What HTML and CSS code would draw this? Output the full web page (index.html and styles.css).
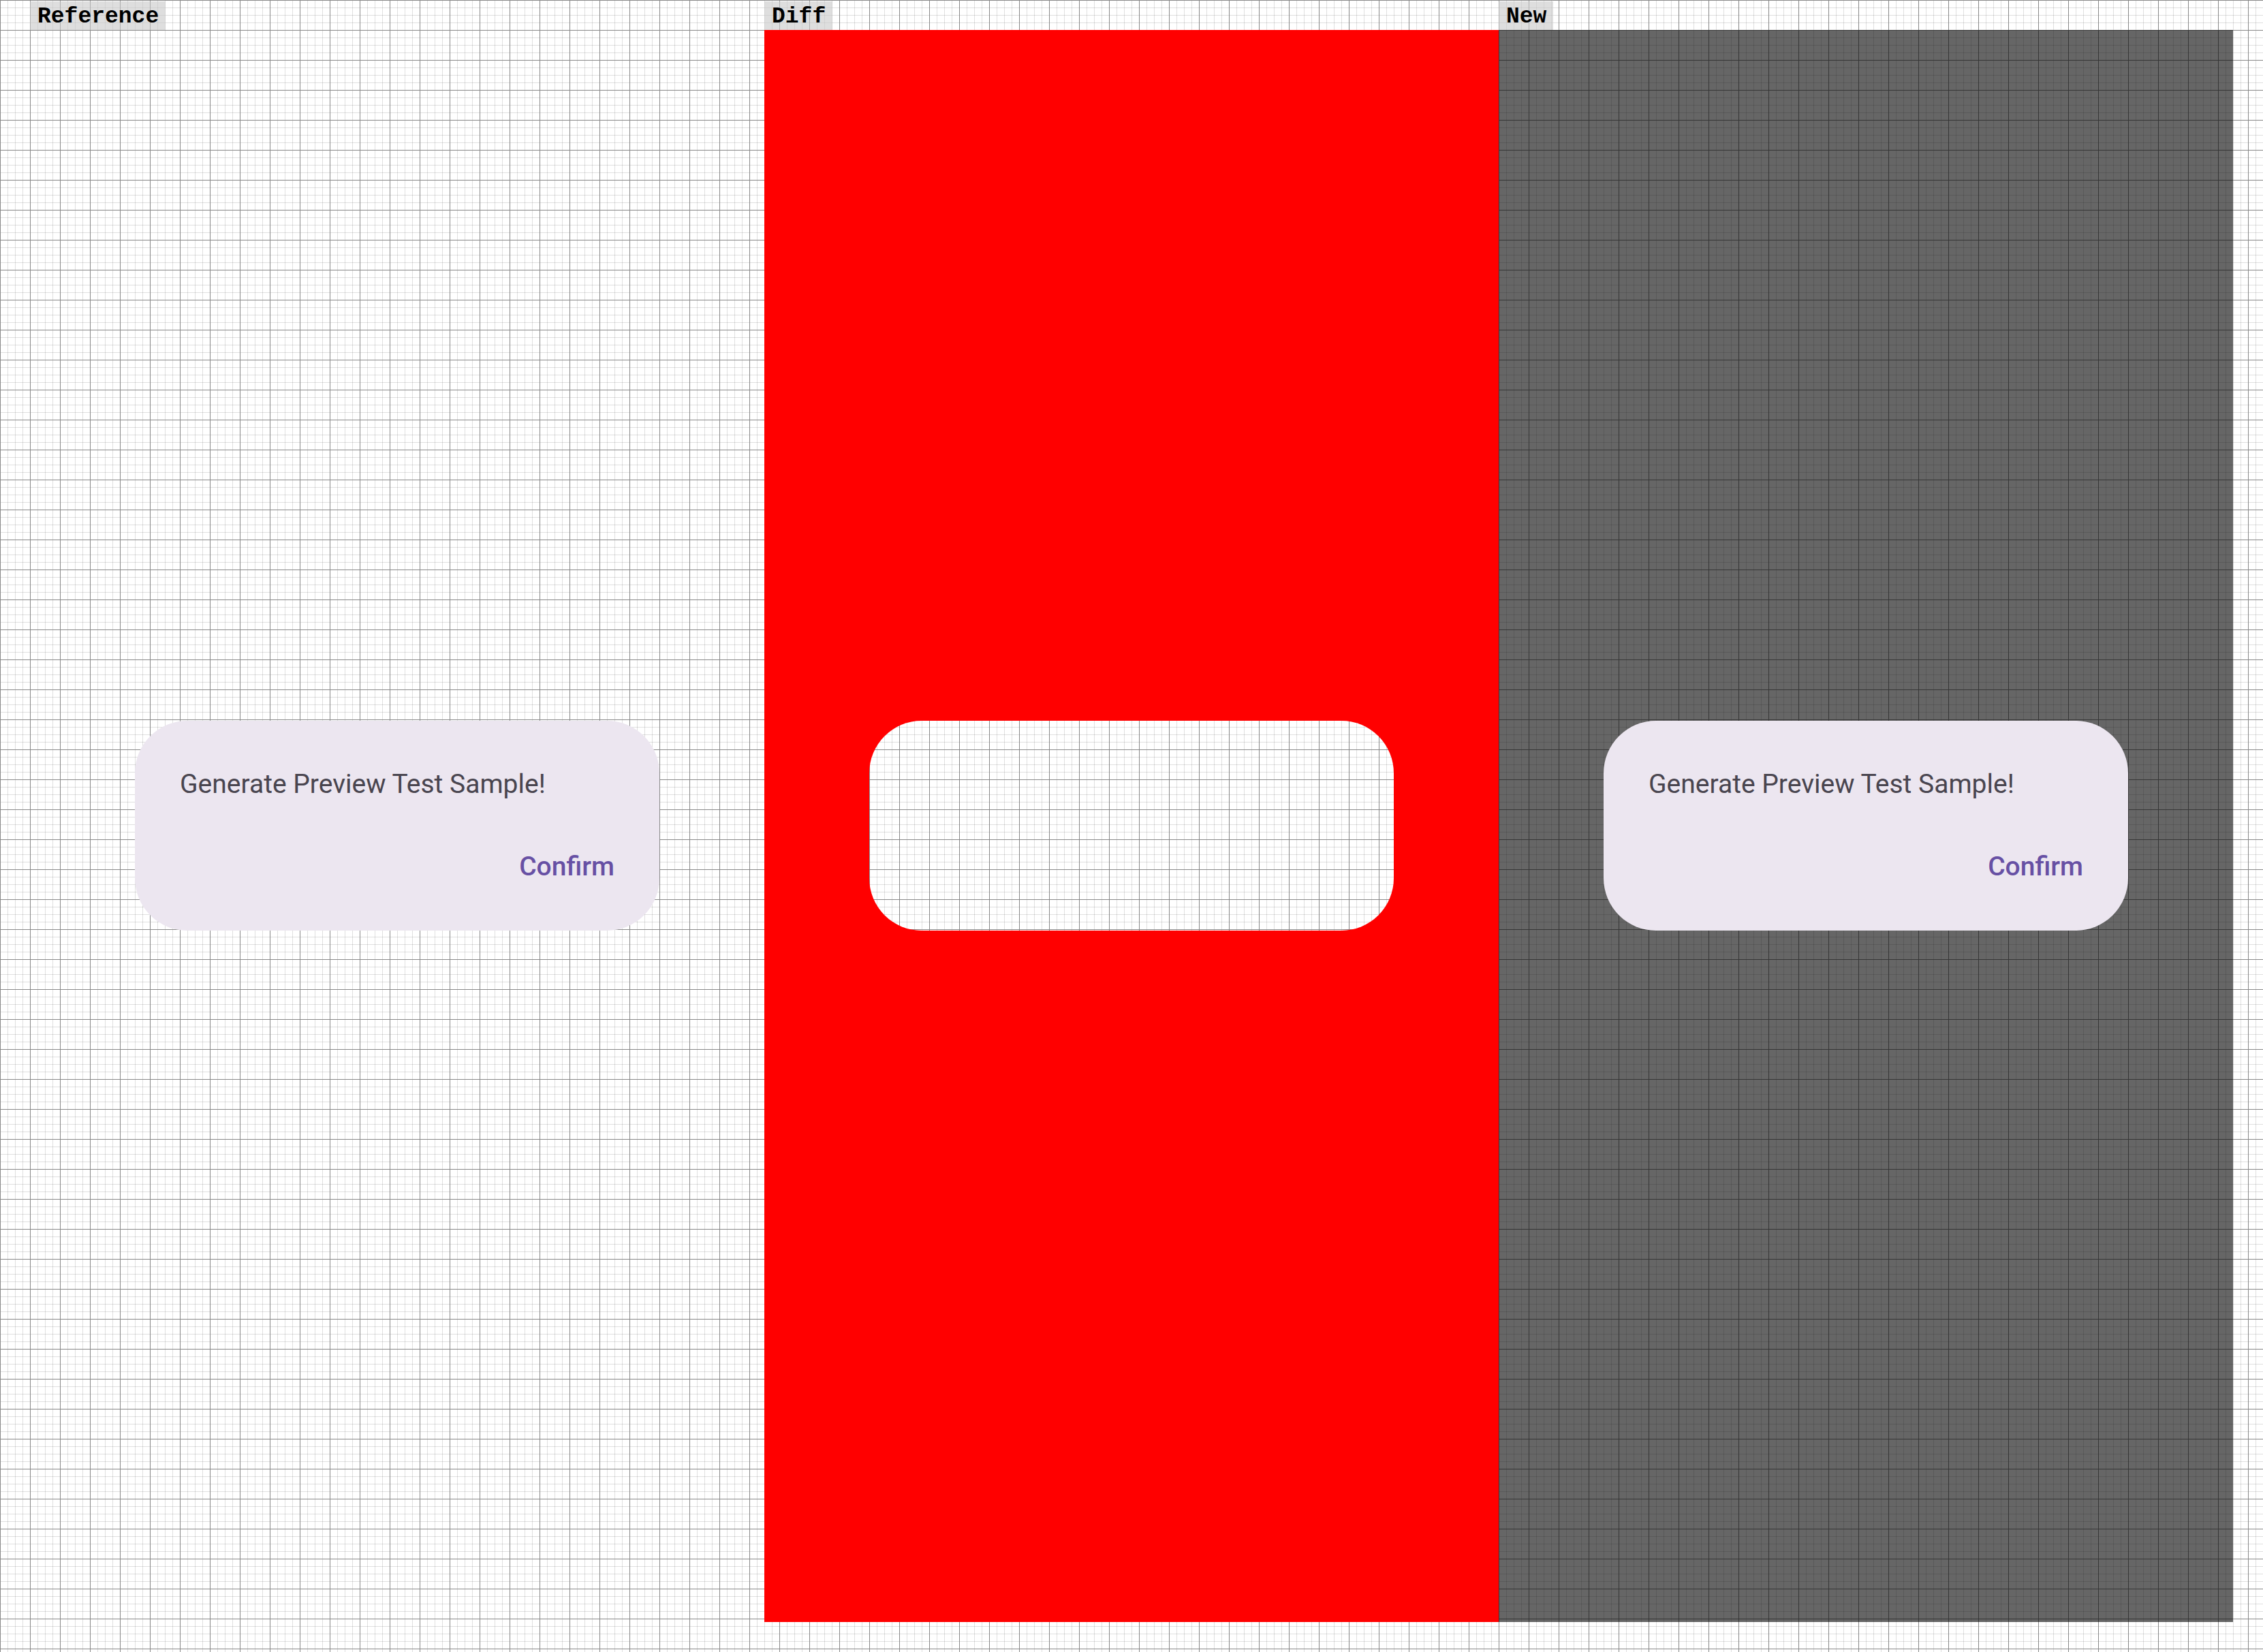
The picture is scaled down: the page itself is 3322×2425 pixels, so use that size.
FILE: index.html
```html
<!DOCTYPE html>
<html lang="en">
<head>
<meta charset="utf-8">
<title>Screenshot comparison</title>
<link rel="stylesheet" href="styles.css">
</head>
<body>
<main class="comparison">
  <section class="column">
    <h2 class="label">Reference</h2>
    <div class="panel">
      <div class="dialog">
        <p class="dialog-text">Generate Preview Test Sample!</p>
        <button class="dialog-confirm" type="button">Confirm</button>
      </div>
    </div>
  </section>
  <section class="column">
    <h2 class="label">Diff</h2>
    <div class="panel">
      <div class="unchanged"></div>
    </div>
  </section>
  <section class="column">
    <h2 class="label">New</h2>
    <div class="panel panel-scrim">
      <div class="dialog">
        <p class="dialog-text">Generate Preview Test Sample!</p>
        <button class="dialog-confirm" type="button">Confirm</button>
      </div>
    </div>
  </section>
</main>
</body>
</html>
```
FILE: styles.css
```css
* {
  box-sizing: border-box;
}

body {
  margin: 0;
  background-color: #fff;
  background-image:
    linear-gradient(to right, #888 1px, transparent 1px),
    linear-gradient(to bottom, #888 1px, transparent 1px),
    linear-gradient(to right, rgba(0, 0, 0, 0.12) 1px, transparent 1px),
    linear-gradient(to bottom, rgba(0, 0, 0, 0.12) 1px, transparent 1px);
  background-size: 44px 44px, 44px 44px, 11px 11px, 11px 11px;
}

.comparison {
  display: flex;
  min-height: 100vh;
  padding: 2px 44px 44px;
}

.column {
  display: flex;
  flex: 1;
  flex-direction: column;
  align-items: flex-start;
}

.label {
  margin: 0;
  padding: 3px 10px 0 11px;
  background: rgba(200, 200, 200, 0.6);
  color: #000;
  font: bold 33px/39px "Courier New", "Liberation Mono", monospace;
}

.panel {
  display: flex;
  flex: 1;
  align-items: center;
  justify-content: center;
  align-self: stretch;
  padding-bottom: 1px;
  overflow: hidden;
}

.panel-scrim {
  background: rgba(0, 0, 0, 0.6);
}

.dialog,
.unchanged {
  width: 770px;
  min-height: 308px;
  border-radius: 77px;
}

.dialog {
  display: flex;
  flex-direction: column;
  gap: 66px;
  padding: 66px;
  background: #ece6f0;
  font-family: Roboto, sans-serif;
}

/* The shadow paints the changed area around the matching region. */
.unchanged {
  box-shadow: 0 0 0 2000px #f00;
}

.dialog-text {
  margin: 0;
  color: #49454f;
  font-size: 39px;
  line-height: 55px;
}

.dialog-confirm {
  align-self: flex-end;
  padding: 0;
  border: 0;
  background: none;
  color: #6750a4;
  font: 500 39px/55px Roboto, sans-serif;
}
```
